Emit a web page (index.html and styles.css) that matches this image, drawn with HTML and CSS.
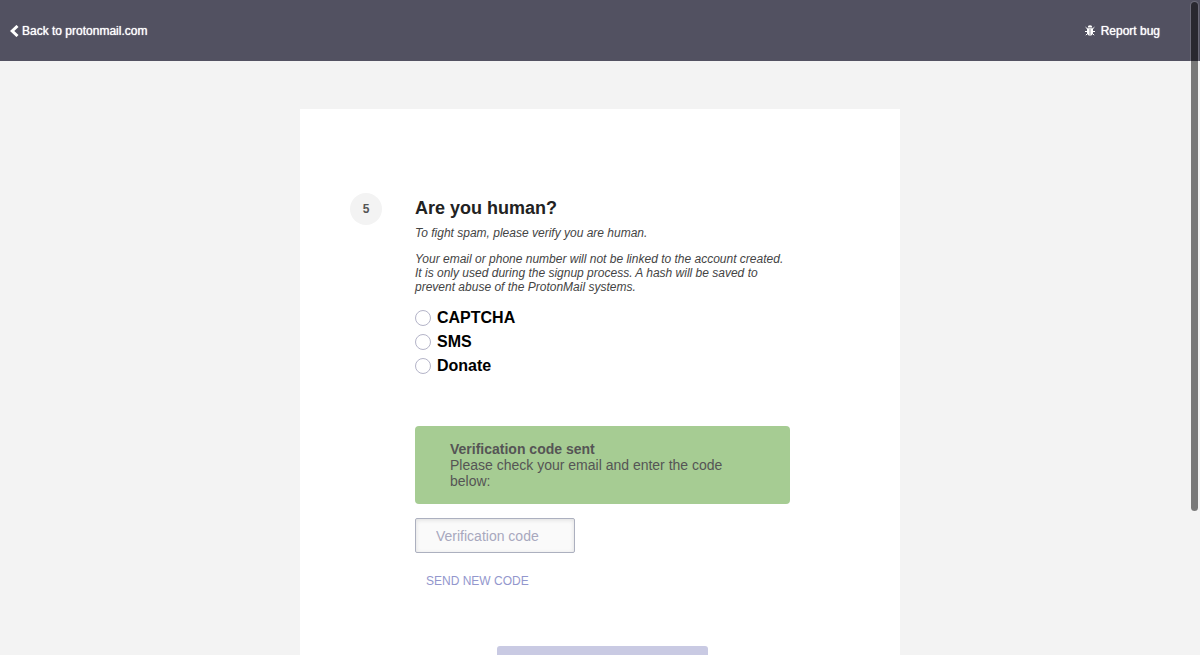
FILE: index.html
```html
<!DOCTYPE html>
<html lang="en">
<head>
<meta charset="utf-8">
<title>Create account</title>
<link rel="stylesheet" href="styles.css">
</head>
<body>
<header class="topbar">
  <a class="topbar-link" href="#">
    <svg class="chevron" width="9" height="12" viewBox="0 0 9 12" aria-hidden="true"><path d="M7.500 1 2.200 6l5.300 5" fill="none" stroke="currentColor" stroke-width="3"/></svg>
    <span>Back to protonmail.com</span>
  </a>
  <a class="topbar-link" href="#">
    <svg class="bug" width="10" height="11" viewBox="0 0 10 11" aria-hidden="true">
      <path d="M2.700 2.600a2.300 2.300 0 0 1 4.600 0z" fill="currentColor"/>
      <path d="M2 3.200h6v4.200c0 2-1.200 3.200-3 3.200s-3-1.200-3-3.200z" fill="currentColor"/>
      <path d="M5 4v6" stroke="#525161" stroke-opacity=".6"/>
      <path d="M.6 2.200 2.500 4M9.400 2.200 7.500 4M0 6.500h2.300M10 6.500H7.700M.8 10.200l1.900-1.900M9.200 10.200 7.300 8.300" fill="none" stroke="currentColor"/>
    </svg>
    <span>Report bug</span>
  </a>
</header>
<main class="card">
  <form class="step">
    <div class="step-number">5</div>
    <div class="step-body">
      <h1 class="title">Are you human?</h1>
      <p class="note">To fight spam, please verify you are human.</p>
      <p class="note">Your email or phone number will not be linked to the account created. It is only used during the signup process. A hash will be saved to prevent abuse of the ProtonMail systems.</p>
      <div class="options">
        <label class="option"><input class="radio" type="radio" name="method">CAPTCHA</label>
        <label class="option"><input class="radio" type="radio" name="method">SMS</label>
        <label class="option"><input class="radio" type="radio" name="method">Donate</label>
      </div>
      <div class="alert" role="status"><strong>Verification code sent</strong><br>Please check your email and enter the code below:</div>
      <input class="code" type="text" placeholder="Verification code" aria-label="Verification code">
      <button class="resend" type="button">SEND NEW CODE</button>
      <button class="submit" type="submit" aria-label="Submit" disabled></button>
    </div>
  </form>
</main>
<div class="scroll-thumb" aria-hidden="true"></div>
</body>
</html>
```

FILE: styles.css
```css
* {
  box-sizing: border-box;
}

body {
  margin: 0;
  height: 100vh;
  overflow: hidden;
  background: #f3f3f3;
  color: #444;
  font-family: "Liberation Sans", Arial, sans-serif;
}

.topbar {
  display: flex;
  justify-content: space-between;
  align-items: center;
  height: 61px;
  padding: 0 40px 0 10px;
  background: #525161;
}

.topbar-link {
  display: flex;
  align-items: center;
  gap: 3px;
  color: #fff;
  font-size: 12px;
  line-height: 16px;
  text-decoration: none;
  text-shadow: 0 0 1px #fff;
}

.bug {
  margin-right: 3px;
}

.card {
  max-width: 600px;
  margin: 48px auto 0;
  padding: 84px 50px 60px;
  background: #fff;
}

.step {
  display: flex;
  gap: 33px;
}

.step-number {
  flex: none;
  width: 32px;
  height: 32px;
  border-radius: 50%;
  background: #f3f3f3;
  color: #555;
  font-size: 12px;
  font-weight: bold;
  line-height: 32px;
  text-align: center;
}

.step-body {
  display: flex;
  flex-direction: column;
  align-items: flex-start;
  width: 375px;
}

.title {
  margin: 4px 0 7px;
  color: #222;
  font-size: 18px;
  line-height: 22px;
}

.note {
  margin: 0 0 12px;
  font-size: 12px;
  font-style: italic;
  line-height: 14px;
}

.options {
  display: grid;
  margin-bottom: 48px;
}

.option {
  display: flex;
  align-items: center;
  gap: 6px;
  color: #000;
  font-size: 16px;
  font-weight: bold;
  line-height: 24px;
}

.radio {
  appearance: none;
  width: 16px;
  height: 16px;
  margin: 0;
  border: 1px solid #b4b4c8;
  border-radius: 50%;
  background: #fff;
}

.radio:checked {
  background: #9397cd;
}

.alert {
  width: 100%;
  margin-bottom: 14px;
  padding: 15px 35px;
  border-radius: 4px;
  background: #a6cc93;
  color: #555;
  font-size: 14px;
  line-height: 16px;
}

.code {
  width: 160px;
  height: 35px;
  margin-bottom: 20px;
  padding: 0 20px;
  border: 1px solid #acb0bf;
  border-radius: 2px;
  background: #fafafa;
  box-shadow: inset 0 1px 4px #ddd;
  color: #555;
  font: 14px "Liberation Sans", Arial, sans-serif;
}

.code::placeholder {
  color: #a8a8be;
}

.resend {
  padding: 0 11px;
  border: 0;
  background: none;
  color: #9397cd;
  font: 12px/16px "Liberation Sans", Arial, sans-serif;
}

.submit {
  align-self: center;
  width: 211px;
  height: 44px;
  margin-top: 57px;
  border: 0;
  border-radius: 3px;
  background: #c9cae3;
}

.scroll-thumb {
  position: fixed;
  top: 1px;
  right: 1px;
  width: 9px;
  height: 78vh;
  border: 1px solid rgba(255, 255, 255, 0.15);
  border-radius: 5px;
  background: rgba(0, 0, 0, 0.5);
  background-clip: padding-box;
}
```
